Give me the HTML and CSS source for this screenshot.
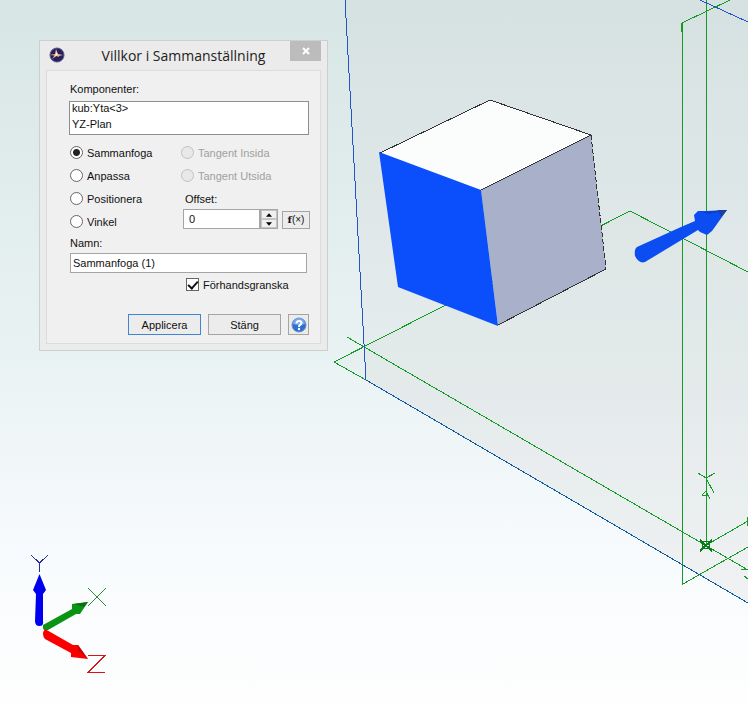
FILE: index.html
```html
<!DOCTYPE html>
<html lang="sv">
<head>
<meta charset="UTF-8" />
<meta name="viewport" content="width=device-width, initial-scale=1" />
<title>Villkor i Sammanställning</title>
<link rel="stylesheet" href="styles.css">
</head>
<body>
  <main class="viewport">
    <svg class="scene" viewBox="0 0 748 704" preserveAspectRatio="xMinYMin slice" aria-hidden="true">
      <!-- Planes -->
      <polygon class="plane" points="345,0 366,380 748,603 748,0" />
      <polygon class="plane floor" points="334,362 630,211 748,272 748,603" />

      <g class="line green">
        <path d="M366 380L334 362L630 211L748 272" />
        <path d="M347 337L748 570" />
        <path d="M730 0L682 23L683 584L748 547" />
        <path d="M706.5 0V545L748 521" />
        <path d="M698 473L706 478L715 473M706 478L714 493" />
        <path d="M702 495L706 491L710 499M702 495L708 496" />
        <path d="M748 517H747V525H748M741 569L748 570M744 576L748 579" />
      </g>
      <g class="line origin">
        <path d="M700 540L712 551M700 551L712 540" />
        <circle cx="706" cy="545" r="4" />
      </g>
      <g class="line blue">
        <path d="M345 0L366 380" />
        <path d="M700 0L748 22" />
      </g>
      <path class="line edge" d="M366 380L748 603" />

      <!-- Cube -->
      <polygon fill="#fbfcfc" points="380,153 490,100 591,135 481,190" />
      <polygon fill="#a9b0ca" points="481,190 591,135 606,269 498,325" />
      <polygon fill="#0b4efb" points="379,152 481,190 498,326 398,287" />
      <path class="line dark" d="M380 153L490 100L591 135L481 190M498 325L606 269" />
      <path class="line dark dashed" d="M591 135L606 269" />

      <!-- Direction arrow -->
      <path fill="#0b4df0" d="M637 247L681 227L695 221L694 215L698 211L706 211L727 210L712 231L707 235L700 232L698 230L645 262Q639 264 635 256Q634 249 637 247Z" />
      <path fill="#0c3fc4" d="M702 212L727 210L709 214Z" />
      <path fill="#1b3f9c" d="M718 210L727 210L721 217Z" />

      <!-- Axis triad -->
      <path fill="#0000ee" d="M33 590L39.500 574L46 590L43 594V621Q44 626 39.500 626T35 621L36 594Z" />
      <path fill="#0a9414" d="M43 625L72 609V604L88 602L80 614H76L48 630Q42 632 43 625Z" />
      <path fill="#0b6e14" d="M74 604L88 602L84 607Z" />
      <path fill="#fa0000" d="M45 629L73 645L78 645L88 659L71 657V653L45 639Q41 634 45 629Z" />
      <path fill="#c40000" d="M78 645L88 659L78 650Z" />
      <path class="line" stroke="#2b2ba0" d="M31 555L39.500 563L48 555M39.500 563V572" />
      <path class="line" stroke="#2a8a35" d="M88 588L106 606M106 588L88 606" />
      <path class="line" stroke="#d51616" d="M88 655.500H105L88 672.500H105" />
    </svg>

    <section class="dialog" role="dialog" aria-labelledby="dialog-title">
      <header class="titlebar">
        <svg class="app-icon" viewBox="0 0 16 16" aria-hidden="true">
          <circle cx="8" cy="8" r="7" fill="#25215f" stroke="#55558a" />
          <path fill="#f3b37a" d="M7 2L9 7L14 8L10 9L9.500 10L7.500 9L3 12L5.500 8.500L1 8L6 7Z" />
          <path fill="#fff" d="M7.500 5L8.500 8L6 9Z" />
        </svg>
        <h1 id="dialog-title">Villkor i Sammanställning</h1>
        <button class="close" type="button" aria-label="Stäng fönster">
          <svg viewBox="0 0 8 8" aria-hidden="true"><path d="M1 1L7 7M7 1L1 7" /></svg>
        </button>
      </header>

      <form class="panel">
        <label for="components">Komponenter:</label>
        <select id="components" class="components" size="2">
          <option>kub:Yta&lt;3&gt;</option>
          <option>YZ-Plan</option>
        </select>

        <div class="options">
          <div class="column">
            <label class="choice"><input type="radio" name="kind" checked> Sammanfoga</label>
            <label class="choice"><input type="radio" name="kind"> Anpassa</label>
            <label class="choice"><input type="radio" name="kind"> Positionera</label>
            <label class="choice"><input type="radio" name="kind"> Vinkel</label>
          </div>
          <div class="column">
            <label class="choice"><input type="radio" name="tangent" disabled> Tangent Insida</label>
            <label class="choice"><input type="radio" name="tangent" disabled> Tangent Utsida</label>
            <label class="offset-label" for="offset">Offset:</label>
            <div class="offset">
              <input id="offset" type="text" value="0">
              <div class="spinner">
                <button type="button" aria-label="Öka"><svg viewBox="0 0 7 4"><path d="M0 4L3.500 0L7 4Z" /></svg></button>
                <button type="button" aria-label="Minska"><svg viewBox="0 0 7 4"><path d="M0 0L3.500 4L7 0Z" /></svg></button>
              </div>
              <button class="formula" type="button"><b>f</b>(×)</button>
            </div>
          </div>
        </div>

        <label class="name-label" for="name">Namn:</label>
        <input id="name" class="name" type="text" value="Sammanfoga (1)">
        <label class="choice preview"><input type="checkbox" checked> Förhandsgranska</label>

        <div class="actions">
          <button class="primary" type="button">Applicera</button>
          <button type="button">Stäng</button>
          <button class="help" type="button" aria-label="Hjälp">
            <svg viewBox="0 0 16 16" aria-hidden="true">
              <circle cx="8" cy="8" r="7" fill="#2f6fd0" stroke="#6f8fc0" />
              <path fill="#78a9ea" d="M2 7A6 6 0 0 1 14 7Q8 9 2 7Z" />
              <path fill="none" stroke="#fff" stroke-width="2" d="M5.500 6.500Q5.500 4 8 4T10.500 6Q10.500 7.200 9 8Q8 8.500 8 10" />
              <circle cx="8" cy="12" r="1.200" fill="#fff" />
            </svg>
          </button>
        </div>
      </form>
    </section>
  </main>
</body>
</html>
```

FILE: styles.css
```css
* {
  box-sizing: border-box;
}

body {
  margin: 0;
  font-family: "Liberation Sans", Arial, sans-serif;
  font-size: 11px;
  line-height: 16px;
  color: #111;
}

.viewport {
  position: relative;
  min-height: 100vh;
  overflow: hidden;
  background: linear-gradient(#d7e6e4, #e9f2f3 50%, #f8fbfd 80%, #fefefe);
}

/* 3D scene */
.scene {
  position: absolute;
  inset: 0;
  width: 100%;
  height: 100%;
}

.plane {
  fill: rgba(205, 200, 205, 0.15);
}

.plane.floor {
  fill: rgba(210, 215, 205, 0.1);
}

.line {
  fill: none;
  stroke-width: 1;
  shape-rendering: crispEdges;
}

.green {
  stroke: #169a26;
}

.origin {
  stroke: #0b7a1a;
  stroke-width: 2;
}

.origin circle {
  stroke-width: 1;
}

.blue {
  stroke: #2454cc;
}

.edge {
  stroke: #0f5a9a;
}

.dark {
  stroke: #333;
}

.dashed {
  stroke-dasharray: 5 2;
}

/* Dialog window */
.dialog {
  position: absolute;
  left: 39px;
  top: 40px;
  width: 289px;
  padding: 0 6px 6px;
  background: #ebebeb;
  border: 1px solid #cbcfcf;
}

.titlebar {
  display: flex;
  align-items: flex-start;
  height: 29px;
}

.app-icon {
  width: 16px;
  height: 16px;
  margin: 6px 0 0 3px;
}

.titlebar h1 {
  flex: 1;
  margin: 4px 0 0;
  padding-left: 12px;
  font-family: "Open Sans", "Segoe UI", sans-serif;
  font-size: 14px;
  font-weight: 400;
  line-height: 22px;
  text-align: center;
  white-space: nowrap;
  color: #222;
}

.close {
  width: 31px;
  height: 20px;
  padding: 0;
  background: #bcbcbc;
  border: 0;
}

.close svg {
  width: 8px;
  height: 8px;
  fill: none;
  stroke: #fff;
  stroke-width: 2;
}

.panel {
  display: flex;
  flex-direction: column;
  padding: 10px 11px 8px 22px;
  background: #f0f0f0;
  border: 1px solid #dcdcdc;
}

.panel > label {
  padding-left: 1px;
}

input,
select,
button {
  font: inherit;
  color: inherit;
}

.components {
  height: 34px;
  margin: 4px 0 6px;
  padding: 0;
  overflow: hidden;
  background: #fff;
  border: 1px solid #8a8f8f;
  border-radius: 0;
}

.components option {
  min-height: 16px;
  padding: 0 2px;
  line-height: 16px;
}

.options {
  display: grid;
  grid-template-columns: 111px 1fr;
  padding-left: 1px;
}

.column {
  display: flex;
  flex-direction: column;
}

.choice {
  display: flex;
  align-items: center;
  gap: 4px;
  height: 23px;
}

.choice:has(:disabled) {
  color: #a0a0a0;
}

.choice input {
  appearance: none;
  width: 13px;
  height: 13px;
  margin: 0;
  background: #fff;
  border: 1px solid #666;
}

.choice input[type="radio"] {
  border-radius: 50%;
}

.choice input[type="radio"]:checked {
  background: radial-gradient(circle, #222 3px, #fff 4px);
}

.choice input:disabled {
  background: #e8e8e8;
  border-color: #c2c2c2;
}

.choice input[type="checkbox"]:checked {
  display: grid;
  place-items: center;
}

.choice input[type="checkbox"]:checked::before {
  content: "";
  width: 4px;
  height: 8px;
  margin-bottom: 2px;
  border: solid #111;
  border-width: 0 2px 2px 0;
  transform: rotate(42deg);
}

.offset-label {
  padding: 4px 0 2px 4px;
}

.offset {
  display: flex;
  align-items: flex-end;
  padding-left: 2px;
}

.offset input {
  width: 77px;
  height: 20px;
  padding: 0 5px;
  background: #fff;
  border: 1px solid #a5a5a5;
}

.spinner {
  display: flex;
  flex-direction: column;
  width: 18px;
  height: 20px;
  margin-right: 4px;
  background: #f0f0f0;
  border: 1px solid #a5a5a5;
}

.spinner button {
  display: flex;
  flex: 1;
  align-items: center;
  justify-content: center;
  padding: 0;
  background: none;
  border: 1px solid #c4c4c4;
}

.spinner svg {
  width: 6px;
  height: 4px;
}

.formula {
  width: 28px;
  height: 18px;
  padding: 0;
  font-size: 10px;
  line-height: 16px;
  background: #ececec;
  border: 1px solid #a5a5a5;
}

.formula b {
  font-family: "DejaVu Serif", serif;
}

.name-label {
  margin-top: 2px;
}

.name {
  width: 237px;
  height: 20px;
  margin: 2px 0 0 1px;
  padding: 0 2px;
  background: #fff;
  border: 1px solid #a5a5a5;
}

.preview {
  margin-left: 116px;
}

.actions {
  display: flex;
  gap: 7px;
  justify-content: flex-end;
  margin-top: 18px;
}

.actions button {
  width: 73px;
  height: 21px;
  padding: 0;
  background: #ececec;
  border: 1px solid #a5a5a5;
}

.actions .primary {
  border-color: #3f85d6;
}

.actions .help {
  display: flex;
  align-items: center;
  justify-content: center;
  width: 21px;
}

.help svg {
  width: 16px;
  height: 16px;
}
```
